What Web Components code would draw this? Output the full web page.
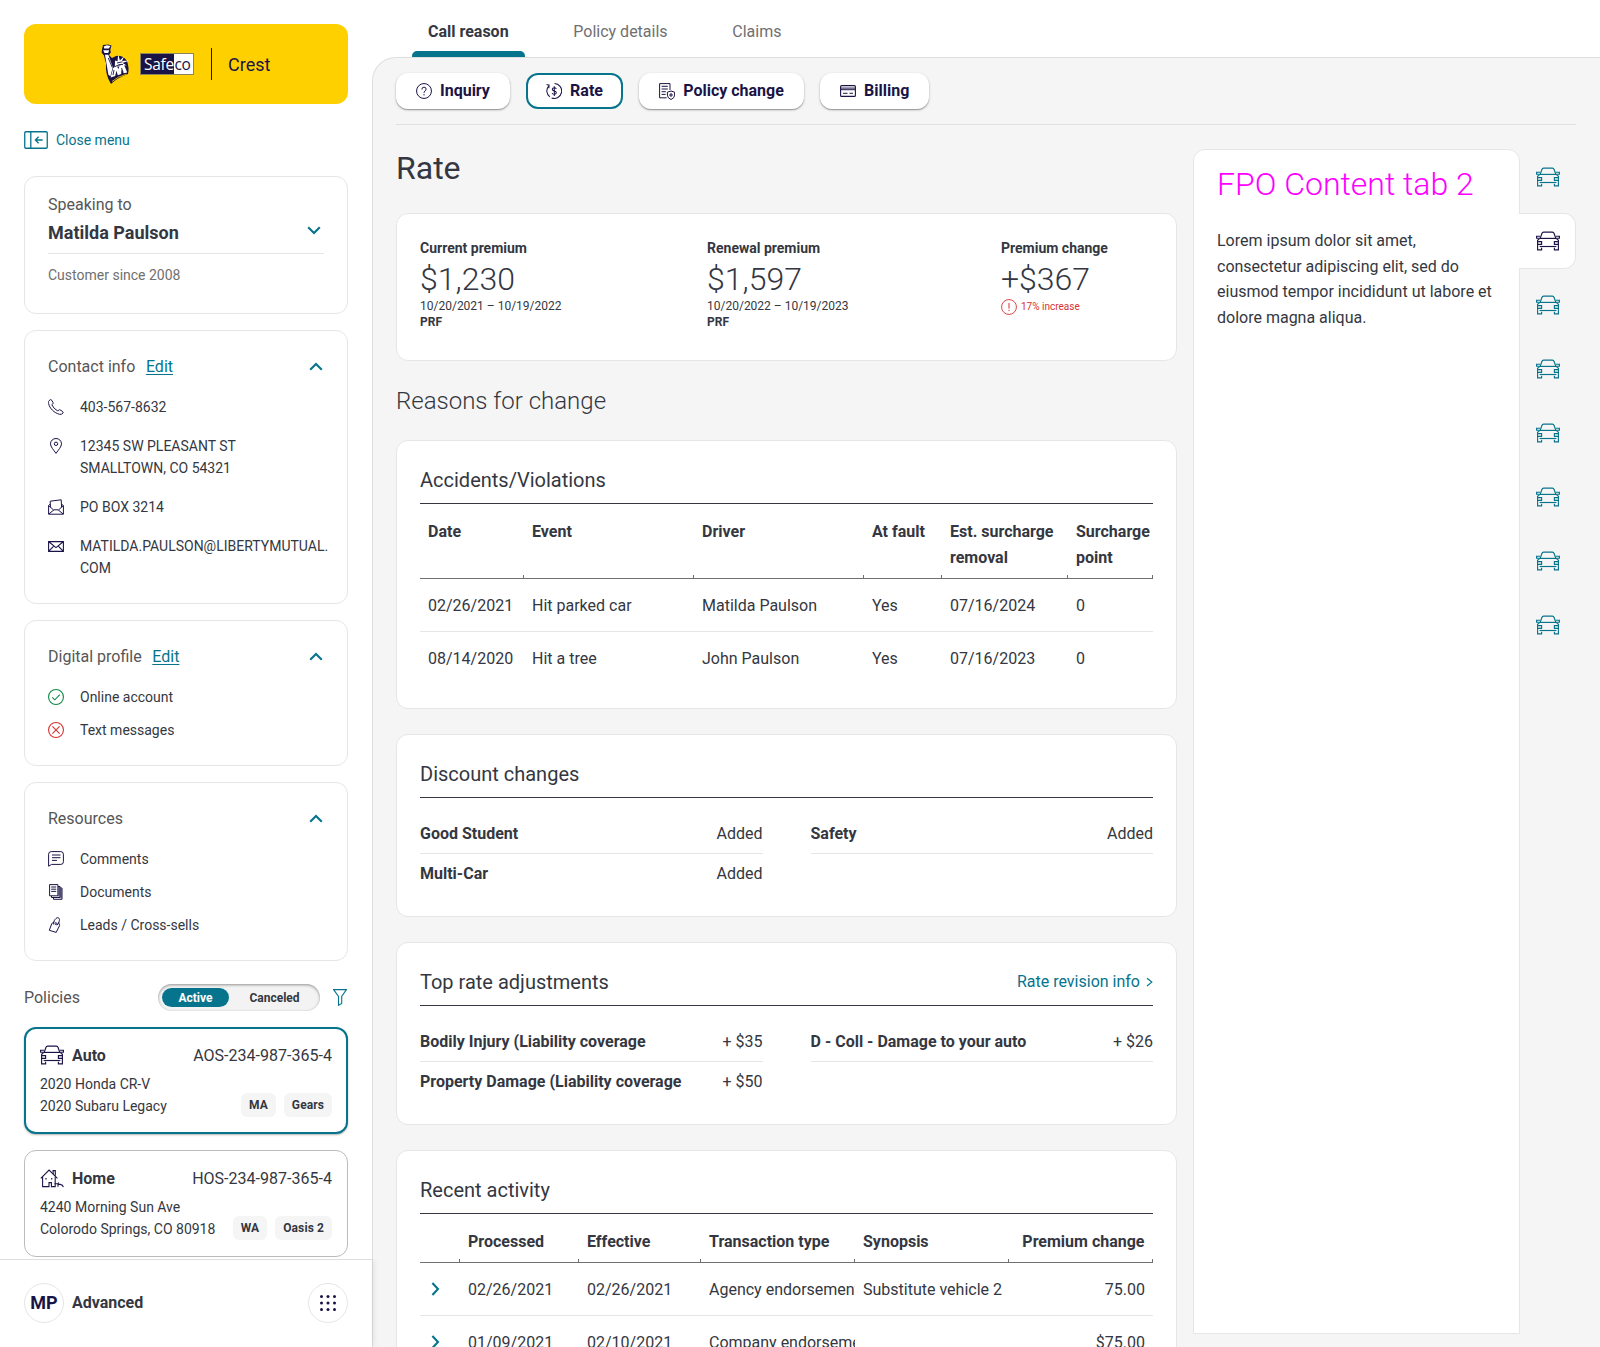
<!DOCTYPE html>
<html lang="en">
<head>
<meta charset="utf-8">
<title>Safeco Crest</title>
<style>
html,body{margin:0;padding:0}
body{font-family:Roboto,"Liberation Sans",sans-serif;font-size:16px;color:#343741;background:#fff;height:1347px;overflow:hidden;
--teal:#06748c;--navy:#1a1446;--line:#e6e6e6;--bg:#f5f5f5;--ink:#343741;--muted:#565656;--gray:#707070}
</style>
</head>
<body>
<crest-app></crest-app>
<script>
const define=(name,html,init)=>{
  const t=document.createElement('template');
  t.innerHTML='<style>*{box-sizing:border-box}:host{display:block;box-sizing:border-box}</style>'+html;
  customElements.define(name,class extends HTMLElement{
    constructor(){super();this.attachShadow({mode:'open'}).append(t.content.cloneNode(true));}
    connectedCallback(){if(init&&!this.ready){this.ready=true;init(this,this.shadowRoot);}}
  });
};

const ICONS={
  car:[24,20,'<path d="M4.2 7.4 6 2.3Q6.4 1.1 7.6 1.1h8.8q1.2 0 1.6 1.2l1.8 5.1"/><path d="M4.2 5.2H.6v2h3.2M19.8 5.2h3.6v2h-3.2"/><path d="M3.8 7.4h16.4"/><path d="M3.8 7.4 1.6 9.2v9.7h4v-2.2M20.2 7.4l2.2 1.8v9.7h-4v-2.2"/><path d="M1.6 10.6h4v2.8h-4M22.4 10.6h-4v2.8h4"/><path d="M3.6 15.5h16.8"/>',1.15],
  house:[24,19,'<path d="M.8 9.4 9.1 1.1l8.3 8.3"/><path d="M13.1 5V1.6h2.2v5.2M2.6 7.8v9.8H9v-4h2.400v4h3.800V8"/><path d="M6 9v1.6M11.7 9v1.6" stroke-width="1.200"/><path d="M14.5 14.8h3.2l1.200-1.200M18 15.200v2.600M18 15.400h2.200q2.600.4 3.200 2.800"/>',1.1],
  close:[24,18,'<rect x=".75" y=".75" width="22.5" height="16.5" rx="1" stroke-width="1.3"/><path d="M6.8 1v16M18.6 9h-7M14.6 5.8 11.4 9l3.2 3.2" stroke-width="1.3"/>',1.2],
  down:[14,9,'<path d="M1.2 1.3 7 7l5.8-5.7" stroke-width="2.1"/>',2],
  up:[14,9,'<path d="M1.2 7.7 7 2l5.8 5.7" stroke-width="2.1"/>',2],
  right:[9,14,'<path d="M1.400 1 7 7l-5.600 6" stroke-width="2.100"/>',2],
  phone:[16,16,'<path d="M1.1 1.7 2.3.7q.9-.3 1.4.5l1.4 2.4q.3.8-.3 1.3l-1 .8q1.7 4 6 6.3l.9-1q.7-.5 1.4-.1l2.5 1.6q.9.8.4 1.500-1.4 1.800-3.400 1.300C6.200 14 1.600 9.400.6 4.500.2 3 .5 2.300 1.100 1.700z"/>',1],
  pin:[16,16,'<path d="M8 15.400C5.500 11.700 2.500 8.800 2.500 5.800a5.500 5.300 0 0 1 11 0c0 3-3 5.900-5.500 9.600z"/><circle cx="8" cy="5.800" r="1.700"/>',1],
  mailopen:[16,16,'<path d="M.6 6.600v8.600h14.800V6.600l-1.800-1.500M2.200 5 .6 6.600l5 4.400M15.400 6.600l-5 4.400M2.400 8.200 2.200 2.200l11-1.400.4 7.400M.8 15l5.200-4.200h4l5.200 4.200"/>',1],
  mail:[16,11,'<path d="M.6.6h14.800v9.800H.6zM.8.8 8 6.600 15.200.8M.8 10.200l4.700-4.800M15.200 10.200l-4.700-4.800"/>',1.1],
  ok:[16,16,'<circle cx="8" cy="8" r="7.450"/><path d="m4.300 8.300 2.500 2.500 5-5.200"/>',1.1],
  bad:[16,16,'<circle cx="8" cy="8" r="7.450"/><path d="m4.400 4.400 7.200 7.200M11.600 4.400l-7.200 7.200"/>',1.1],
  alert:[16,16,'<circle cx="8" cy="8" r="7.450" stroke-width=".9"/><path d="M8 4v5.600M8 10.800v1.300"/>',1],
  comment:[16,16,'<path d="M.6 15.200V3.200Q.6.600 3.200.6h9.600q2.600 0 2.600 2.600v7.600q0 2.600-2.600 2.600H3.600zM4 4h8.500M4 6.700h8.500M4 9.400h5"/>',1],
  docs:[16,16,'<path d="M1.600.600h8.300v11.200H1.600z"/><path d="M3.200 3h5M3.200 5.200h5M3.200 7.400h5M10 2.500h2v11H3.500v-1.600M12 4h2v11.300H5.500v-1.700M11 3v9.600M13 5v9.300"/>',1],
  tag:[16,16,'<path d="M6.500 4.800 3.800 6.500 1.300 13.300 8.200 15.400 11.600 8.500 10.600 5.200M5.600 7.500C5 5 7.400.700 9.700.700c2.400 0 1.900 3.300.9 5.200L8.900 8.300"/><circle cx="7.900" cy="6.600" r=".9"/>',1],
  filter:[14,17,'<path d="M.6.600h12.800L8.700 7.500v7L5.500 16.300V7.500z"/>',1.1],
  question:[16,16,'<circle cx="8" cy="8" r="7.450"/><path d="M5.900 6.500q0-2.400 2.100-2.400t2.100 2q0 1.100-1.100 1.900T8 9.900M8 11.100v1.300"/>',1],
  rate:[16,16,'<path d="M8.500.600a7.400 7.400 0 1 1-2.900 14.300M3.900 13.900A7.400 7.400 0 0 1 2.700 3M.600 1.500l2.500.700-.300 3"/><path d="M10.300 5.800Q10 4.700 8.300 4.700T6.300 6.200Q6.300 7.500 8.300 7.900t2 1.900q0 1.500-2 1.500T6.100 10M8.300 3.300v9.600"/>',1.050],
  policy:[16,17,'<path d="M11 7V.600H.600v14.200h7M2.600 3.300h6.200M2.600 6h6.200M2.600 8.700h4.200M2.600 11.400h4"/><path d="M8.400 9.200 12 8l3.600 1.200v2.900q0 3-3.600 4.400-3.600-1.400-3.600-4.400zM12 10v4M10 12h4"/>',1],
  card:[16,12,'<rect x=".6" y=".6" width="14.800" height="10.800" rx="1"/><path d="M.6 3.100h14.800M.6 4.700h14.800M3 8.300h4.500M9.500 8.300H13" stroke-width="1"/>',1.1],
  caret:[7,10,'<path d="m1 1.200 4.800 3.900L1 9"/>',1.200],
  dots:[16,16,[1.500,8,14.500].map(y=>[1.500,8,14.500].map(x=>`<circle cx="${x}" cy="${y}" r="1.500" fill="currentColor" stroke="none"/>`).join('')).join(''),1]
};
define('crest-icon','<style>:host{display:block;flex:none}svg{display:block}</style><span></span>',(h,r)=>{
  const [w,ht,p,s]=ICONS[h.getAttribute('name')];
  r.querySelector('span').innerHTML=`<svg width="${w}" height="${ht}" viewBox="0 0 ${w} ${ht}" fill="none" stroke="currentColor" stroke-width="${s}">${p}</svg>`;
});

define('brand-bar',`<style>
:host{height:80px;border-radius:12px;background:#ffd000;display:flex;align-items:center;padding-left:77px;color:var(--navy)}
svg{flex:none}
.name{display:flex;height:22px;border:1px solid #8d8560;margin-left:9px;font:400 15.500px/20px "Open Sans",sans-serif;letter-spacing:-.3px;width:54px;overflow:hidden;background:#fff}
.name b{font-weight:400;background:var(--navy);color:#fff;margin:-1px 0 -1px -1px;padding:1px 0 0 4px;width:34px;flex:none}
.name i{font-style:normal;padding-left:.5px}
.rule{width:1px;height:32px;background:var(--navy);margin:0 16px 0 17px}
.app{font-size:18px}
</style>
<svg width="30" height="41" viewBox="0 0 30 41"><path d="M5 19Q4 31 10 40 16 34 27 30 28.500 24 26 17 22 11 15 12L11 14 6.500 9.500H2.500L4 16Z" fill="#1a1446"/>
<path d="M1 5.500.600 8.500 2.500 11h5.500l1.800-2.500L9.300 5.500 10.500 1.500 7 .400 2 1Z" fill="#1a1446"/>
<path d="m2.800 2.600 3-1.300 3.600.7-1.600 2.600H3.200zM2.200 6.300h6l-1 2.700H3.500zM4 10.800h3.300l4.500 12.500-2.400 9-2-1.500z" fill="#fff"/>
<path d="m9.600 33.500 2.600-9.500 3.300-2.500 2 3.500 1.300-4.500 4-.5 3.400 8.500-3.400.8-2.300-4-.3 4.600-3.400 1.400-1.400-4.500-1.200 5.200z" fill="#fff"/>
<path d="m14 16.500 2.500.7.700-7 1.700 6.200 4.200-4.200-2 4.800 7.200-.5-6.800 2.600 4.300 2.500-6-.8-2 1.600-4 .100z" fill="#fff"/>
<path d="m16 19 5.500-1.200M17.500 21.300l3-1M7.300 14l4 9.500M14 22.500q4-2.500 8-2M13 26l-1 5M20.500 24l1.500 4" stroke="#1a1446" stroke-width=".9" fill="none"/><path d="M11 37.500q5.500-5 14.500-7.300" stroke="#ffd000" stroke-width=".8" fill="none"/></svg>
<div class="name"><b>Safe</b><i>co</i></div><div class="rule"></div><div class="app">Crest</div>`);

define('side-card',`<style>
:host{border:1px solid var(--line);border-radius:12px;padding:24px 23px;background:#fff}
header{display:flex;align-items:center;height:23px;margin-bottom:18px;color:var(--muted);line-height:23px}
a{color:var(--teal);text-decoration:underline;text-underline-offset:2px;margin-left:10.600px}
crest-icon{margin-left:auto;margin-right:1px;color:var(--teal)}
.list{display:flex;flex-direction:column;gap:11px}
:host([loose]) .list{gap:17px}
</style><header><span></span><a>Edit</a><crest-icon name="up"></crest-icon></header><div class="list"><slot></slot></div>`,(h,r)=>{
  r.querySelector('span').textContent=h.getAttribute('heading');
  if(!h.hasAttribute('edit'))r.querySelector('a').remove();
});
define('side-item',`<style>:host{display:flex;gap:16px;font-size:14px;line-height:22px;white-space:nowrap}
div{width:16px;height:22px;display:flex;align-items:center;justify-content:center;color:var(--c,var(--navy))}</style><div></div><span><slot></slot></span>`,(h,r)=>{
  r.querySelector('div').innerHTML=`<crest-icon name="${h.getAttribute('icon')}"></crest-icon>`;
});

define('caller-card',`<style>:host{border:1px solid var(--line);border-radius:12px;height:138px;padding:17px 23px 0;background:#fff}
.to{color:var(--muted);line-height:22px}
.row{display:flex;justify-content:space-between;align-items:center;height:38px;border-bottom:1px solid var(--line);padding-right:3px;font-size:18px;font-weight:700}
.row crest-icon{color:var(--teal);margin-top:-8px}.row span{margin-top:-5px}
.since{font-size:14px;color:var(--gray);line-height:22px;margin-top:10px}</style>
<div class="to">Speaking to</div><div class="row"><span>Matilda Paulson</span><crest-icon name="down"></crest-icon></div><div class="since">Customer since 2008</div>`);

define('policy-filter',`<style>:host{display:flex;align-items:center;height:27px;color:var(--muted);padding-right:1px}
.sw{margin-left:auto;width:162px;height:27px;border-radius:14px;background:#f3f3f3;box-shadow:inset 0 1px 3px rgba(0,0,0,.4);display:flex;padding:4px;font-size:12px;font-weight:700;line-height:20px;color:var(--ink);text-align:center}
.on{width:67px;height:19px;flex:none;background:var(--teal);color:#fff;border-radius:9.500px}.off{flex:none;width:91px}
crest-icon{color:var(--teal);margin-left:13px}</style>
<span>Policies</span><div class="sw"><div class="on">Active</div><div class="off">Canceled</div></div><crest-icon name="filter"></crest-icon>`);

define('policy-card',`<style>:host{border:1px solid #bcbcbc;border-radius:12px;height:107px;padding:15px 15px 0;background:#fff}
:host([active]){border:2px solid var(--teal);padding:14px 14px 0;box-shadow:0 1px 2px rgba(0,0,0,.3)}
.top{display:flex;align-items:center;height:24px}
.top crest-icon{color:var(--navy);margin-right:8px}.no{margin-left:auto;letter-spacing:.02px}
.bot{display:flex;margin-top:6px;font-size:14px;line-height:22px;justify-content:space-between;align-items:flex-end;white-space:nowrap}
.tags{display:flex;gap:8px}.tags span{background:#f5f5f5;border-radius:6px;font-size:12px;font-weight:700;line-height:24px;padding:0 8px;letter-spacing:.1px}</style>
<div class="top"></div><div class="bot"><div><slot></slot></div><div class="tags"></div></div>`,(h,r)=>{
  const a=n=>h.getAttribute(n);
  r.querySelector('.top').innerHTML=`<crest-icon name="${a('icon')}"></crest-icon><b>${a('kind')}</b><span class="no">${a('number')}</span>`;
  r.querySelector('.tags').innerHTML=a('tags').split(',').map(t=>`<span>${t}</span>`).join('');
});

define('user-footer',`<style>:host{display:flex;align-items:center;height:88px;border-top:1px solid #dedede;background:#fff;padding:0 24px 1px;flex:none;box-shadow:0 0 8px rgba(0,0,0,.12);clip-path:inset(0 -8px 0 0)}
.c{width:40px;height:40px;border:1px solid var(--line);border-radius:50%;display:flex;align-items:center;justify-content:center;color:var(--navy);font-weight:700;font-size:18px;line-height:20px}
.c span{margin-top:-1px}b{margin:-2px 0 0 8px}.c:last-child{margin-left:auto}</style><div class="c"><span>MP</span></div><b>Advanced</b><div class="c"><crest-icon name="dots"></crest-icon></div>`);

define('side-bar',`<style>:host{width:372px;height:1347px;display:flex;flex-direction:column;background:#fff}
.scroll{height:1259px;flex:none;overflow:hidden;padding:24px 24px 0;display:flex;flex-direction:column;gap:16px}
.scroll>*{flex:none}
.close{display:flex;align-items:center;gap:8px;height:20px;color:var(--teal);font-size:14px;margin:10px 0 10px}
policy-filter{margin:7px 0 0}</style>
<div class="scroll"><brand-bar></brand-bar>
<div class="close"><crest-icon name="close"></crest-icon><span>Close menu</span></div>
<caller-card></caller-card>
<side-card heading="Contact info" edit loose>
<side-item icon="phone">403-567-8632</side-item>
<side-item icon="pin">12345 SW PLEASANT ST<br>SMALLTOWN, CO 54321</side-item>
<side-item icon="mailopen">PO BOX 3214</side-item>
<side-item icon="mail">MATILDA.PAULSON@LIBERTYMUTUAL.<br>COM</side-item></side-card>
<side-card heading="Digital profile" edit><side-item icon="ok" style="--c:#128845">Online account</side-item><side-item icon="bad" style="--c:#d93232">Text messages</side-item></side-card>
<side-card heading="Resources"><side-item icon="comment">Comments</side-item><side-item icon="docs">Documents</side-item><side-item icon="tag">Leads / Cross-sells</side-item></side-card>
<policy-filter></policy-filter>
<policy-card active icon="car" kind="Auto" number="AOS-234-987-365-4" tags="MA,Gears">2020 Honda CR-V<br>2020 Subaru Legacy</policy-card>
<policy-card icon="house" kind="Home" number="HOS-234-987-365-4" tags="WA,Oasis 2">4240 Morning Sun Ave<br>Colorodo Springs, CO 80918</policy-card>
</div><user-footer></user-footer>`);

define('main-tabs',`<style>:host{display:flex;gap:32.700px;height:57px;padding-left:40px;color:var(--gray)}
div{padding:0 16px;height:57px;line-height:63px;display:flex;flex-direction:column;justify-content:space-between}
.on{color:var(--ink);font-weight:700}.on::after{content:"";height:6px;background:var(--teal);border-radius:5px 5px 0 0;margin:-12px -16px 0}</style>
<div class="on">Call reason</div><div>Policy details</div><div>Claims</div>`);

define('reason-button',`<style>:host{display:flex;align-items:center;height:36px;border-radius:12px;background:#fff;padding:0 20px;color:var(--navy);font-weight:700;box-shadow:0 1px 3px rgba(0,0,0,.2),0 1px 1px rgba(0,0,0,.28)}
:host([active]){box-shadow:inset 0 0 0 2px var(--teal)}.t{margin:-1px 0 0 8px}</style><div class="i"></div><span class="t"><slot></slot></span>`,(h,r)=>{
  r.querySelector('.i').innerHTML=`<crest-icon name="${h.getAttribute('icon')}"></crest-icon>`;
});

define('content-card',`<style>:host{border:1px solid var(--line);border-radius:12px;background:#fff;padding:23px}
header{height:40px;border-bottom:1px solid var(--ink);display:flex;justify-content:space-between;font-size:20px;line-height:32px}
.x{font-size:16px;color:var(--teal);display:flex;align-items:center;gap:6px;height:32px}</style><header><span></span><div class="x"><slot name="link"></slot></div></header><slot></slot>`,(h,r)=>{
  r.querySelector('span').textContent=h.getAttribute('heading');
});

define('premium-summary',`<style>:host{display:flex;height:148px;border:1px solid var(--line);border-radius:12px;background:#fff;padding:24px 23px 0}
section{width:287px}section:nth-of-type(2){width:294px}section:last-child{width:auto}
b{display:block;font-size:14px;line-height:20px}
.amt{font-size:32px;font-weight:300;line-height:42px}
.d{font-size:12px;line-height:16px;margin-top:-2px}.p{font-size:12px;line-height:16px}
.inc{display:flex;align-items:center;gap:4px;color:#d93232;font-size:10px;height:16px;margin-top:-1px}.inc span{margin-top:-1px}</style>
<section><b>Current premium</b><div class="amt">$1,230</div><div class="d">10/20/2021 – 10/19/2022</div><b class="p">PRF</b></section>
<section><b>Renewal premium</b><div class="amt">$1,597</div><div class="d">10/20/2022 – 10/19/2023</div><b class="p">PRF</b></section>
<section><b>Premium change</b><div class="amt">+$367</div><div class="inc"><crest-icon name="alert"></crest-icon><span>17% increase</span></div></section>`);

define('data-table',`<style>
.r{display:grid;height:53px;align-items:center;border-bottom:1px solid var(--line);padding-top:2px}
.r:last-child{border-bottom-color:transparent}
.h{display:grid;padding-top:15px;font-weight:700;line-height:26px;border-bottom:1px solid var(--gray)}
.h div{padding:0 8px 7px;background:linear-gradient(var(--gray),var(--gray)) right bottom/1px 3px no-repeat}
.r div{padding-left:8px;white-space:nowrap;overflow:hidden;line-height:26px}
.h .right{text-align:right;padding:0 8.500px 0 0}.r .right{text-align:right;padding-right:8px}
.r crest-icon{color:var(--teal);margin:-3px 0 0 3px}</style><div id="t"></div>`,(h,r)=>{
  const d=JSON.parse(h.getAttribute('data')),right=h.hasAttribute('last-right');
  const row=(c,cls)=>`<div class="${cls}" style="grid-template-columns:${h.getAttribute('cols')}">${c.map((v,i)=>v==='>'?'<div style="overflow:visible"><crest-icon name="right"></crest-icon></div>':`<div${right&&i===c.length-1?' class="right"':''}>${v}</div>`).join('')}</div>`;
  r.querySelector('#t').innerHTML=d.map((c,i)=>row(c,i?'r':'h')).join('');
});

define('pair-list',`<style>:host{display:grid;grid-template-columns:1fr 1fr;column-gap:48px;padding-top:16px}
div{display:flex;justify-content:space-between;height:40px;line-height:39px;white-space:nowrap;border-bottom:1px solid var(--line)}
div.l{border:0;height:39px}</style>`,(h,r)=>{
  const d=JSON.parse(h.getAttribute('data'));
  d.forEach(([k,v],i)=>{const e=document.createElement('div');if(i>1)e.className='l';e.innerHTML=`<b>${k}</b><span>${v}</span>`;r.append(e);});
});

define('info-panel',`<style>:host{display:flex;width:383px;height:1185px}
.p{width:327px;border:1px solid var(--line);border-radius:12px 12px 0 0;background:#fff;padding:15px 23px}
h2{margin:0;font-size:32px;font-weight:300;color:#f0f;line-height:38px;white-space:nowrap}
p{margin:25px 0 0;font-size:16px;line-height:25.600px;margin-right:-4px}
.rail{width:57px;margin-left:-1px;display:flex;flex-direction:column;gap:8px;color:var(--teal)}
.rail div{height:56px;display:flex;align-items:center;padding-left:17px}
.rail crest-icon{margin-top:-1px}
.rail .on{background:#fff;border:1px solid var(--line);border-left:0;border-radius:0 12px 12px 0;color:var(--navy)}</style>
<div class="p"><h2>FPO Content tab 2</h2><p>Lorem ipsum dolor sit amet, consectetur adipiscing elit, sed do eiusmod tempor incididunt ut labore et dolore magna aliqua.</p></div><div class="rail"></div>`,(h,r)=>{
  for(let i=0;i<8;i++)r.querySelector('.rail').insertAdjacentHTML('beforeend',`<div${i===1?' class="on"':''}><crest-icon name="car"></crest-icon></div>`);
});

define('crest-app',`<style>:host{display:flex;width:1600px;height:1347px;overflow:hidden}
main{flex:1;display:flex;flex-direction:column;min-width:0}
side-bar{flex:none;position:relative;z-index:1;background:none}
.panel{height:1290px;flex:none;background:var(--bg);border:1px solid #dedede;border-width:1px 0 0 1px;border-top-left-radius:24px;padding:15px 24px 0 23px}
.btns{display:flex;gap:16.200px;height:52px;border-bottom:1px solid #e0e0e0}
.cols{display:flex;gap:16px;padding-top:24px}
.left{width:781px;flex:none}
h1{margin:0 0 26px;font-size:32px;font-weight:400;line-height:38px}
h2{margin:24px 0 23px;font-size:24px;font-weight:300;line-height:32px}
content-card{margin-bottom:25px}.a{height:269px}.b{height:183px}</style>
<side-bar></side-bar>
<main><main-tabs></main-tabs><div class="panel">
<div class="btns"><reason-button icon="question">Inquiry</reason-button><reason-button icon="rate" active>Rate</reason-button><reason-button icon="policy">Policy change</reason-button><reason-button icon="card">Billing</reason-button></div>
<div class="cols"><div class="left"><h1>Rate</h1><premium-summary></premium-summary><h2>Reasons for change</h2>
<content-card class="a" heading="Accidents/Violations"><data-table cols="104px 170px 170px 78px 126px 85px" data='[["Date","Event","Driver","At fault","Est. surcharge removal","Surcharge point"],["02/26/2021","Hit parked car","Matilda Paulson","Yes","07/16/2024","0"],["08/14/2020","Hit a tree","John Paulson","Yes","07/16/2023","0"]]'></data-table></content-card>
<content-card class="b" heading="Discount changes"><pair-list data='[["Good Student","Added"],["Safety","Added"],["Multi-Car","Added"]]'></pair-list></content-card>
<content-card class="b" heading="Top rate adjustments"><span slot="link">Rate revision info</span><crest-icon slot="link" name="caret"></crest-icon><pair-list data='[["Bodily Injury (Liability coverage","+ $35"],["D - Coll - Damage to your auto","+ $26"],["Property Damage (Liability coverage","+ $50"]]'></pair-list></content-card>
<content-card heading="Recent activity"><data-table last-right cols="40px 119px 122px 154px 154px 144px" data='[["","Processed","Effective","Transaction type","Synopsis","Premium change"],[">","02/26/2021","02/26/2021","Agency endorsement","Substitute vehicle 2","75.00"],[">","01/09/2021","02/10/2021","Company endorsement","","$75.00"]]'></data-table></content-card>
</div><info-panel></info-panel></div></div></main>`);
</script>
</body>
</html>
